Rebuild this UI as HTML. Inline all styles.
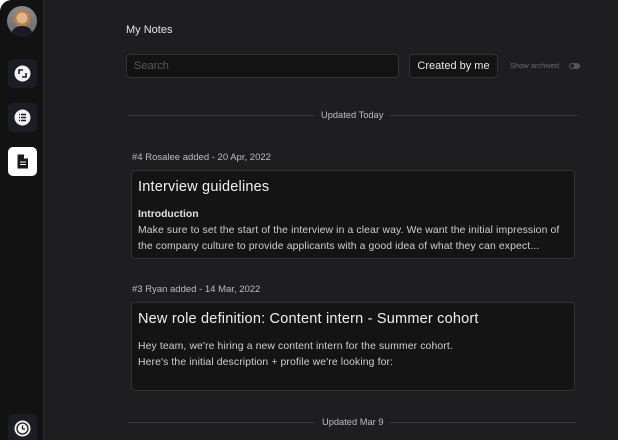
<!DOCTYPE html>
<html><head><style>
*{margin:0;padding:0;box-sizing:border-box}
body{width:618px;height:440px;background:#fff;overflow:hidden;font-family:"Liberation Sans",sans-serif;}
.app{position:absolute;left:0;top:0;width:618px;height:440px;background:#1e1e20;border-top-left-radius:12px;overflow:hidden}
.side{position:absolute;left:0;top:0;width:44px;height:440px;background:#121212;border-right:1px solid #2c2c2e}
.av{position:absolute;left:7px;top:6px;width:30px;height:30px;border-radius:50%;background:radial-gradient(circle at 50% 40%,#e0b58a 0 5px,#b08050 6px 8px,transparent 9px),linear-gradient(#8a8a8c,#6c6c6e);overflow:hidden}
.av:after{content:"";position:absolute;left:5px;top:20px;width:20px;height:14px;border-radius:50% 50% 0 0;background:#1a1a22}
.btn{position:absolute;left:8px;width:29px;height:29px;border-radius:5px;background:#1c1d24}
.btn.w{background:#fff}
.t{position:absolute;color:#e6e6e6}
.search{position:absolute;left:126px;top:54px;width:273px;height:24px;border:1px solid #333;border-radius:4px;background:#131314;color:#5a5a5c;font-size:11px;padding:5px 7px}
.cb{position:absolute;left:409px;top:54px;width:89px;height:24px;border:1px solid #333;border-radius:4px;background:#141415;color:#e8e8e8;font-size:11px;text-align:center;line-height:22px}
.line{position:absolute;height:1px;background:#3a3a3c}
.card{position:absolute;left:131px;width:444px;height:89px;background:#141415;border:1px solid #333;border-radius:4px;color:#cfcfcf;padding:0 6px}
.meta{position:absolute;left:132px;font-size:9.5px;color:#bdbdbd}
.body{font-size:10.4px;line-height:16px;letter-spacing:0.12px}
.ttl{font-size:14.5px;color:#f0f0f0;margin-top:8px;letter-spacing:0.2px}
</style></head><body><div class="app">
<div class="side">
<div class="av"></div>
<div class="btn" style="top:59px"><svg width="29" height="29"><circle cx="14.5" cy="14.5" r="8" fill="#f2f2f2"/><path d="M11 15v-4h4M18 14v4h-4" stroke="#1c1d24" stroke-width="1.6" fill="none"/></svg></div>
<div class="btn" style="top:103px"><svg width="29" height="29"><circle cx="14.5" cy="14.5" r="8" fill="#f2f2f2"/><path d="M11 11.5h1M13 11.5h5M11 14.5h1M13 14.5h5M11 17.5h1M13 17.5h5" stroke="#1c1d24" stroke-width="1.5"/></svg></div>
<div class="btn w" style="top:147px"><svg width="29" height="29"><path d="M9.5 7.5h6.5l4 4v10h-10.5z" fill="#1a1a1a"/><path d="M16 7.5v4h4" fill="#fff"/><path d="M12 15h6M12 17.5h6" stroke="#fff" stroke-width="1"/></svg></div>
<div class="btn" style="top:414px;height:30px"><svg width="29" height="29"><circle cx="14.5" cy="14.5" r="8" fill="#f2f2f2"/><circle cx="14.5" cy="14.5" r="5.5" fill="none" stroke="#1c1d24" stroke-width="1.3"/><path d="M14.5 11.5v3.5h2.5" stroke="#1c1d24" stroke-width="1.3" fill="none"/></svg></div>
</div>
<div class="t" style="left:126px;top:24px;font-size:11px">My Notes</div>
<div class="search">Search</div>
<div class="cb">Created by me</div>
<div class="t" style="left:510px;top:61px;font-size:7.5px;color:#6a6a6c">Show archived</div>
<div style="position:absolute;left:569px;top:63px;width:11px;height:6px;border-radius:3px;background:#555"><div style="position:absolute;left:1px;top:1px;width:4px;height:4px;border-radius:50%;background:#222"></div></div>
<div class="line" style="left:128px;top:115px;width:186px"></div>
<div class="t" style="left:321px;top:110px;font-size:9.3px;color:#bdbdbd">Updated Today</div>
<div class="line" style="left:390px;top:115px;width:187px"></div>
<div class="meta" style="top:152px">#4 Rosalee added - 20 Apr, 2022</div>
<div class="card" style="top:170px">
<div class="ttl">Interview guidelines</div>
<div style="font-size:10.4px;font-weight:bold;color:#e0e0e0;margin-top:13px;line-height:14px">Introduction</div>
<div class="body" style="margin-top:1px">Make sure to set the start of the interview in a clear way. We want the initial impression of the company culture to provide applicants with a good idea of what they can expect...</div>
</div>
<div class="meta" style="top:284px">#3 Ryan added - 14 Mar, 2022</div>
<div class="card" style="top:302px">
<div class="ttl">New role definition: Content intern - Summer cohort</div>
<div class="body" style="margin-top:12px">Hey team, we're hiring a new content intern for the summer cohort.<br>Here's the initial description + profile we're looking for:</div>
</div>
<div class="line" style="left:128px;top:422px;width:186px"></div>
<div class="t" style="left:322px;top:417px;font-size:9.3px;color:#bdbdbd">Updated Mar 9</div>
<div class="line" style="left:390px;top:422px;width:187px"></div>
</div></body></html>
